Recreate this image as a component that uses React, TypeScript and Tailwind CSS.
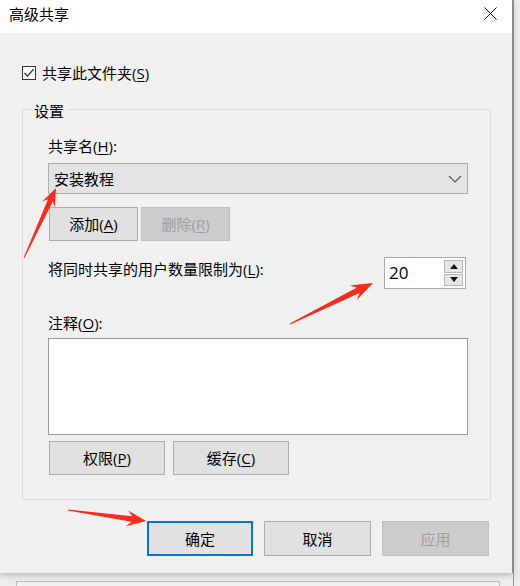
import React from "react";

const FONT = { fontFamily: '"Open Sans", "Noto Sans CJK SC", sans-serif' };

type Pt = [number, number];

// tapered red arrow like the screenshot annotations
function arrowPoints(tail: Pt, tip: Pt, headLen: number, headHalf: number, shaftHalf: number) {
  const dx = tip[0] - tail[0];
  const dy = tip[1] - tail[1];
  const len = Math.hypot(dx, dy);
  const ux = dx / len;
  const uy = dy / len;
  const nx = -uy;
  const ny = ux;
  const at = (back: number, side: number): Pt => [
    tip[0] - ux * back + nx * side,
    tip[1] - uy * back + ny * side,
  ];
  const pts: Pt[] = [
    [tail[0] + nx * 0.4, tail[1] + ny * 0.4],
    at(headLen * 0.75, shaftHalf),
    at(headLen, headHalf),
    tip,
    at(headLen, -headHalf),
    at(headLen * 0.75, -shaftHalf),
    [tail[0] - nx * 0.4, tail[1] - ny * 0.4],
  ];
  return pts.map((p) => p.map((v) => v.toFixed(1)).join(",")).join(" ");
}

function Key({ k }: { k: string }) {
  return (
    <>
      (<span className="underline underline-offset-2">{k}</span>)
    </>
  );
}

function Button({
  children,
  width,
  disabled,
  primary,
}: {
  children: React.ReactNode;
  width: string;
  disabled?: boolean;
  primary?: boolean;
}) {
  const base = "flex items-center justify-center text-[15px] leading-[20px]";
  if (disabled)
    return <div className={`${base} ${width} h-full bg-[#cccccc] border border-[#bfbfbf] text-[#9f9f9f]`}>{children}</div>;
  if (primary)
    return <div className={`${base} ${width} h-full bg-[#e1e1e1] border-2 border-[#0078d7] text-black`}>{children}</div>;
  return <div className={`${base} ${width} h-full bg-[#e1e1e1] border border-[#adadad] text-black`}>{children}</div>;
}

export default function App() {
  return (
    <div className="relative w-[520px] h-[586px] bg-[#ececec] overflow-hidden" style={FONT}>
      {/* window behind */}
      <div className="absolute left-[16px] top-[581px] w-[484px] h-[20px] border-t border-l border-r border-[#bdbdbd] bg-[#f0f0f0]" />
      <div className="absolute left-[513px] top-0 w-[1px] h-[586px] bg-[#9a9a9a]" />

      <div className="relative w-[513px] h-[573px] flex flex-col bg-[#f0f0f0] border-r border-[#8a8a8a] shadow-[0_2px_6px_rgba(0,0,0,0.22)]">
        {/* title bar */}
        <div className="h-[33px] bg-white flex items-start justify-between pl-[9px] pr-[15px]">
          <span className="mt-[4px] text-[15px] leading-[20px] text-black">高级共享</span>
          <svg width="13" height="13" viewBox="0 0 13 13" className="mt-[7px]">
            <path d="M0.5 0.5 L12.5 12.5 M12.5 0.5 L0.5 12.5" stroke="#111" strokeWidth="1" fill="none" />
          </svg>
        </div>

        <div className="flex flex-col px-[22px] text-[15px] text-black">
          {/* share checkbox */}
          <div className="mt-[30px] h-[20px] flex items-center gap-[6px]">
            <div className="w-[14px] h-[14px] border border-[#333333] bg-white flex items-center justify-center">
              <svg width="12" height="12" viewBox="0 0 12 12">
                <path d="M1.5 6 L4.5 9.2 L10.6 2.2" stroke="#222" strokeWidth="1.2" fill="none" />
              </svg>
            </div>
            <span className="leading-[20px]">
              共享此文件夹<Key k="S" />
            </span>
          </div>

          {/* settings group */}
          <div className="relative mt-[26px] w-[469px] h-[391px] border border-[#dcdcdc] pl-[25px] pt-[26px] flex flex-col">
            <span className="absolute left-[8px] top-[-9px] px-[3px] bg-[#f0f0f0] leading-[20px]">设置</span>

            <span className="leading-[20px]">
              共享名<Key k="H" />:
            </span>

            <div className="mt-[7px] w-[420px] h-[31px] bg-[#e3e3e3] border border-[#adadad] flex items-center justify-between pl-[5px] pr-[5px]">
              <span className="leading-[20px]">安装教程</span>
              <svg width="14" height="8" viewBox="0 0 14 8">
                <path d="M1 1 L7 7 L13 1" stroke="#555" strokeWidth="1.1" fill="none" />
              </svg>
            </div>

            <div className="mt-[13px] h-[34px] flex gap-[3px] ml-[1px]">
              <Button width="w-[89px]">
                添加<Key k="A" />
              </Button>
              <Button width="w-[89px]" disabled>
                删除<Key k="R" />
              </Button>
            </div>

            <div className="mt-[16px] w-[418px] flex items-start justify-between">
              <span className="mt-[2px] leading-[20px]">
                将同时共享的用户数量限制为<Key k="L" />:
              </span>
              <div className="w-[82px] h-[32px] border border-[#a9a9a9] bg-white flex">
                <div className="flex-1 flex items-center pl-[4px] text-[17px] leading-[20px]">20</div>
                <div className="w-[21px] flex flex-col gap-[1px] py-[2px] pr-[2px]">
                  <div className="flex-1 bg-[#e5e5e5] border border-[#b8b8b8] flex items-center justify-center">
                    <svg width="8" height="5" viewBox="0 0 8 5">
                      <path d="M0 5 L4 0 L8 5 Z" fill="#111" />
                    </svg>
                  </div>
                  <div className="flex-1 bg-[#e5e5e5] border border-[#b8b8b8] flex items-center justify-center">
                    <svg width="8" height="5" viewBox="0 0 8 5">
                      <path d="M0 0 L8 0 L4 5 Z" fill="#111" />
                    </svg>
                  </div>
                </div>
              </div>
            </div>

            <span className="mt-[24px] leading-[20px]">
              注释<Key k="O" />:
            </span>

            <div className="mt-[5px] w-[420px] h-[97px] bg-white border border-[#9a9a9a]" />

            <div className="mt-[6px] h-[34px] flex gap-[8px] ml-[1px]">
              <Button width="w-[116px]">
                权限<Key k="P" />
              </Button>
              <Button width="w-[116px]">
                缓存<Key k="C" />
              </Button>
            </div>
          </div>

          {/* dialog buttons */}
          <div className="mt-[21px] h-[35px] flex justify-end gap-[11px] mr-[1px]">
            <Button width="w-[106px]" primary>
              确定
            </Button>
            <Button width="w-[107px]">取消</Button>
            <Button width="w-[107px]" disabled>
              应用
            </Button>
          </div>
        </div>
      </div>

      {/* annotation arrows */}
      <svg className="absolute left-0 top-0 pointer-events-none" width="520" height="586" viewBox="0 0 520 586">
        <polygon points={arrowPoints([24, 258], [56, 188], 18, 7, 2.6)} fill="#fa2a1c" />
        <polygon points={arrowPoints([290, 324], [373, 283], 22, 8, 3)} fill="#fa2a1c" />
        <polygon points={arrowPoints([68, 510], [146, 521], 19, 8, 2.8)} fill="#fa2a1c" />
      </svg>
    </div>
  );
}
